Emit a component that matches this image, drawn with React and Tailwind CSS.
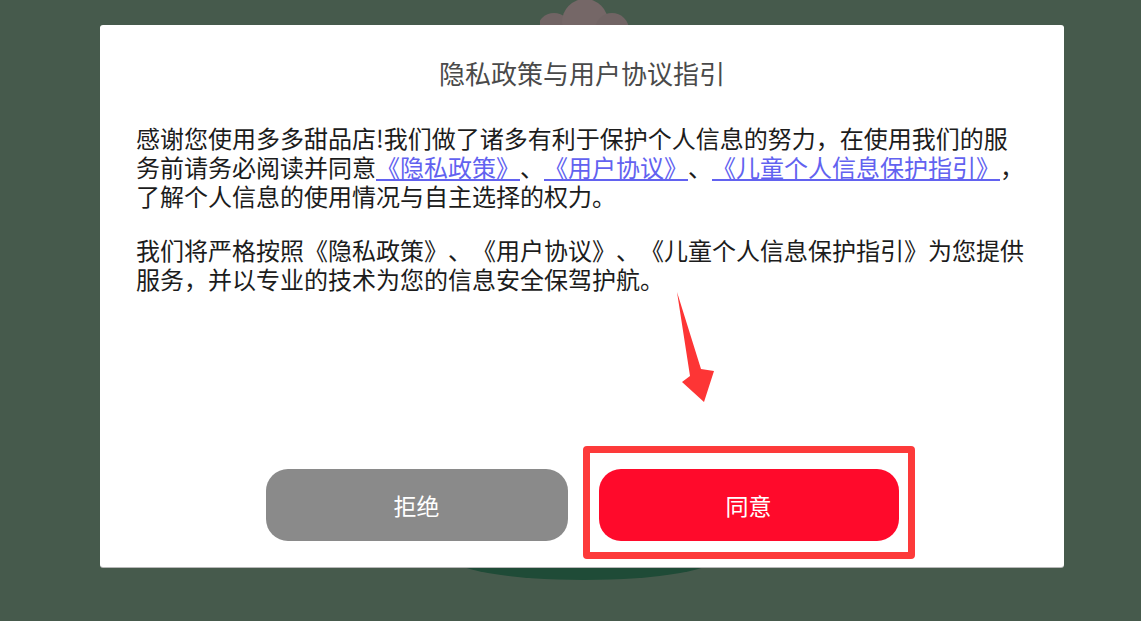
import React from "react";

export default function App() {
  return (
    <div className="relative w-[1141px] h-[621px] overflow-hidden bg-[#465a4c] pl-[100px] pt-[25px] font-['Noto_Sans_CJK_SC','Noto_Sans',sans-serif] [text-spacing-trim:space-all]">
      {/* decorative background shapes */}
      <svg className="absolute left-[540px] top-0" width="90" height="30" viewBox="0 0 90 30">
        <circle cx="14" cy="30" r="17" fill="#716464" />
        <circle cx="45" cy="22" r="23" fill="#756767" />
        <circle cx="72" cy="30" r="17" fill="#716464" />
      </svg>
      <div className="absolute left-[448px] top-[532px] w-[272px] h-[48px] rounded-[50%] bg-[#1f4b37]" />

      <div className="relative w-[964px] h-[542px] bg-white rounded-[3px] shadow-[0_1px_0_#b8b8b8] flex flex-col">
        <h1 className="pt-[32px] text-center text-[26px] leading-[32px] text-[#4a4a4a] font-normal">
          隐私政策与用户协议指引
        </h1>
        <div className="mt-[34px] px-[36px] text-[24px] leading-[29px] text-[#1c1c1c] [text-spacing-trim:space-all]">
          <p className="[text-spacing-trim:space-all]">
            感谢您使用多多甜品店!我们做了诸多有利于保护个人信息的努力，在使用我们的服务前请务必阅读并同意
            <span className="text-[#6262f0] underline">《隐私政策》</span>、
            <span className="text-[#6262f0] underline">《用户协议》</span>、
            <span className="text-[#6262f0] underline">《儿童个人信息保护指引》</span>
            ，了解个人信息的使用情况与自主选择的权力。
          </p>
          <p className="mt-[25px] [text-spacing-trim:space-all]">
            我们将严格按照《隐私政策》、《用户协议》、《儿童个人信息保护指引》为您提供服务，并以专业的技术为您的信息安全保驾护航。
          </p>
        </div>

        <div className="mt-auto mb-[26px] flex justify-center gap-[31px]">
          <button className="w-[302px] h-[72px] rounded-[22px] bg-[#8a8a8a] text-white text-[23px]">
            拒绝
          </button>
          <div className="relative">
            <button className="w-[300px] h-[72px] rounded-[22px] bg-[#ff0a2b] text-white text-[23px]">
              同意
            </button>
            <div className="absolute -left-[16px] -right-[16px] -top-[23px] -bottom-[18px] border-[7px] border-[#fd3a3a] rounded-[4px] pointer-events-none" />
          </div>
        </div>

        <svg
          className="absolute left-[575px] top-[265px] pointer-events-none"
          width="45"
          height="116"
          viewBox="0 0 45 116"
        >
          <polygon points="2,2 26,79 39,81 29,112 7,92 15,86" fill="#fd3535" />
        </svg>
      </div>
    </div>
  );
}
